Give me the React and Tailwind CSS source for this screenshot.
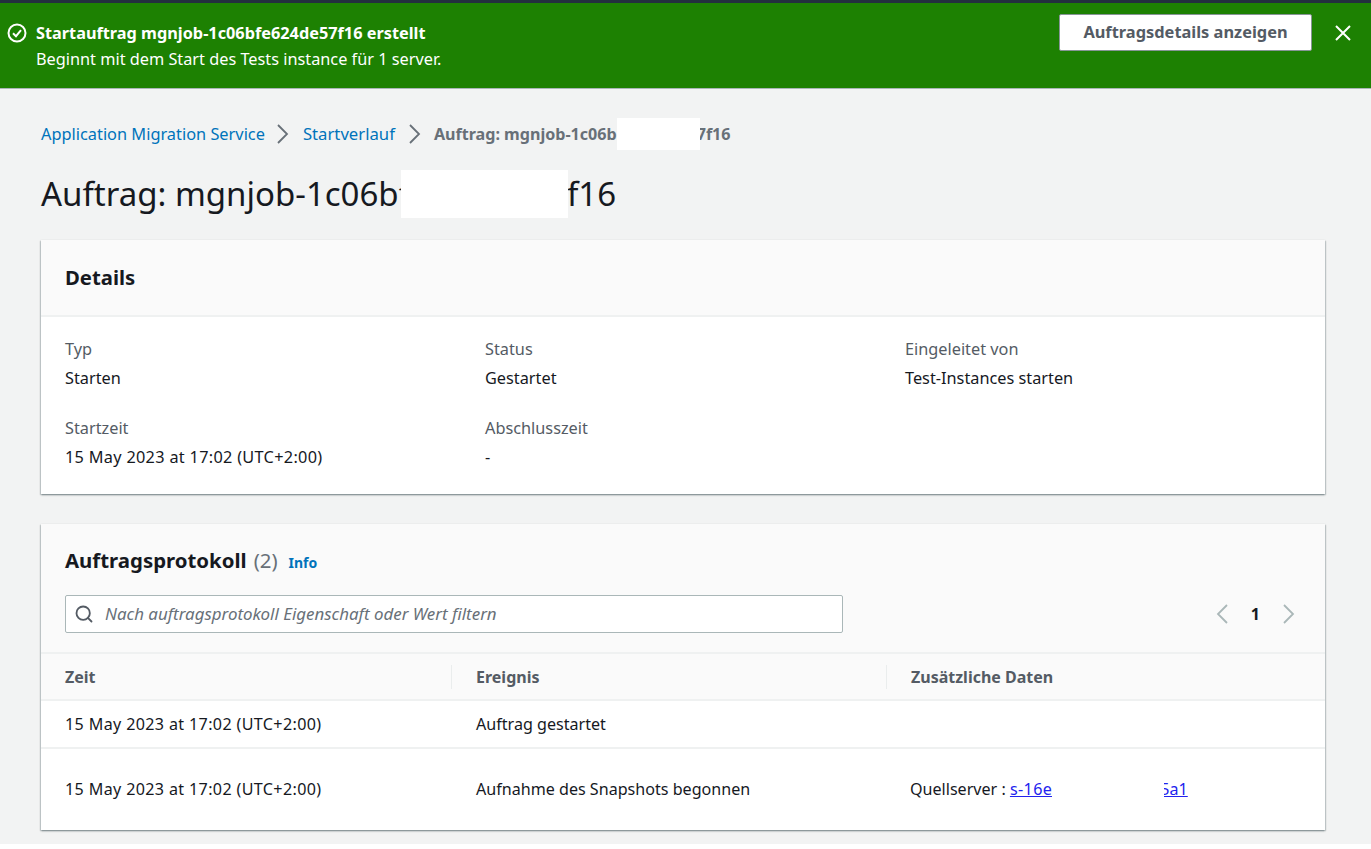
import { Search } from 'lucide-react';

function Redacted({ className }) {
  return <span className={`relative inline-block shrink-0 bg-white ${className}`} />;
}

function Chevron({ left = false, className }) {
  return (
    <svg className={`h-[20px] w-[12px] shrink-0 ${className}`} viewBox="0 0 12 20" fill="none" stroke="currentColor" strokeWidth="1.8">
      <path d={left ? 'M11 1l-9 9 9 9' : 'M1 1l9 9-9 9'} />
    </svg>
  );
}

function Field({ label, value }) {
  return (
    <div>
      <div className="text-[16.3px] leading-[22px] text-[#545b64]">{label}</div>
      <div className="mt-[7px] text-[16.3px] leading-[22px] text-[#16191f]">{value}</div>
    </div>
  );
}

const cardShadow = 'shadow-[0_1px_2px_0_rgba(0,28,36,0.35),1px_1px_1px_0_rgba(0,28,36,0.12),-1px_1px_1px_0_rgba(0,28,36,0.12)]';
const dateText = '15 May 2023 at 17:02 (UTC+2:00)';

export default function App() {
  return (
    <div className="min-h-[849px] bg-white font-['Noto_Sans',sans-serif]">
      <div className="h-[844px] overflow-hidden bg-[#f2f3f3]">
        <div className="h-[3px] bg-[#232f3e]" />
        <div className="flex h-[86px] items-start justify-between border-b border-[#aab7b8] bg-[#1d8102] text-white">
          <div className="flex pl-[7px] pt-[17px]">
            <svg className="mt-[3px] h-[20px] w-[20px]" viewBox="0 0 20 20" fill="none" stroke="currentColor" strokeWidth="2">
              <circle cx="10" cy="10" r="8.5" />
              <path d="M6 10.2l3 3 5-6" />
            </svg>
            <div className="ml-[9px] text-[16.3px] leading-[26px]">
              <div className="font-bold">Startauftrag mgnjob-1c06bfe624de57f16 erstellt</div>
              <div>Beginnt mit dem Start des Tests instance für 1 server.</div>
            </div>
          </div>
          <div className="flex items-center pr-[19px] pt-[11px]">
            <button className="h-[37px] w-[253px] rounded-[2px] border border-[#879596] bg-white text-[16.4px] font-bold text-[#545b64]">
              Auftragsdetails anzeigen
            </button>
            <svg className="ml-[22px] h-[18px] w-[18px]" viewBox="0 0 18 18" fill="none" stroke="currentColor" strokeWidth="2">
              <path d="M2 2l14 14M16 2L2 16" />
            </svg>
          </div>
        </div>

        <div className="pl-[41px] pr-[46px]">
          <div className="mt-[29px] flex h-[32px] items-center text-[16.35px]">
            <span className="text-[#0073bb]">Application Migration Service</span>
            <Chevron className="ml-[12px] mr-[14px] text-[#687078]" />
            <span className="text-[16.7px] text-[#0073bb]">Startverlauf</span>
            <Chevron className="ml-[14px] mr-[13px] text-[#687078]" />
            <span className="font-bold text-[16.1px] text-[#687078]">Auftrag: mgnjob-1c06b</span>
            <Redacted className="h-[32px] w-[83px]" />
            <span className="-ml-[3px] font-bold text-[16.1px] text-[#687078]">7f16</span>
          </div>

          <h1 className="mt-[20px] flex h-[48px] items-center text-[33px] font-normal text-[#16191f]">
            <span>Auftrag: mgnjob-1c06bf</span>
            <Redacted className="-ml-[9px] h-[48px] w-[167px]" />
            <span className="-ml-[1px]">f16</span>
          </h1>

          <section className={`mt-[22px] h-[254px] bg-white ${cardShadow}`}>
            <div className="flex h-[77px] items-center border-b-2 border-[#eff1f1] bg-[#fafafa] pb-[1px] pl-[24px]">
              <h2 className="text-[20.3px] font-bold text-[#16191f]">Details</h2>
            </div>
            <div className="grid grid-cols-[420px_420px_1fr] gap-y-[28px] pl-[24px] pt-[21px]">
              <Field label="Typ" value="Starten" />
              <Field label="Status" value="Gestartet" />
              <Field label="Eingeleitet von" value="Test-Instances starten" />
              <Field label="Startzeit" value={<span className="tracking-[0.3px]">{dateText}</span>} />
              <Field label="Abschlusszeit" value="-" />
            </div>
          </section>

          <section className={`mt-[30px] h-[306px] bg-white ${cardShadow}`}>
            <div className="h-[130px] border-b-2 border-[#eff1f1] bg-[#fafafa] pl-[24px] pr-[30px]">
              <div className="flex items-baseline pt-[21px]">
                <h2 className="text-[20.4px] font-bold leading-[30px] text-[#16191f]">Auftragsprotokoll</h2>
                <span className="ml-[7px] text-[20.4px] text-[#687078]">(2)</span>
                <span className="ml-[11px] text-[14px] font-bold text-[#0073bb]">Info</span>
              </div>
              <div className="mt-[19px] flex items-center justify-between">
                <div className="flex h-[38px] w-[778px] items-center rounded-[2px] border border-[#aab7b8] bg-white pl-[8px]">
                  <Search className="h-[20px] w-[20px] text-[#545b64]" strokeWidth={2.2} />
                  <span className="ml-[11px] text-[16.9px] italic text-[#687078]">Nach auftragsprotokoll Eigenschaft oder Wert filtern</span>
                </div>
                <div className="flex items-center text-[#aab7b8]">
                  <Chevron left />
                  <span className="mx-[23px] text-[16px] font-bold text-[#16191f]">1</span>
                  <Chevron />
                </div>
              </div>
            </div>

            <div className="grid h-[47px] grid-cols-[410px_435px_1fr] items-center border-b-2 border-[#eff1f1] bg-[#fafafa] text-[16px] font-bold text-[#545b64]">
              <div className="pl-[24px]">Zeit</div>
              <div className="h-[24px] border-l border-[#eaeded] pl-[24px] leading-[24px]">Ereignis</div>
              <div className="h-[24px] border-l border-[#eaeded] pl-[24px] leading-[24px]">Zusätzliche Daten</div>
            </div>
            <div className="grid h-[48px] grid-cols-[410px_435px_1fr] items-center border-b-2 border-[#eff1f1] text-[16.1px] text-[#16191f]">
              <div className="pl-[24px] tracking-[0.36px]">{dateText}</div>
              <div className="pl-[25px]">Auftrag gestartet</div>
              <div />
            </div>
            <div className="grid h-[81px] grid-cols-[410px_435px_1fr] items-center text-[16.1px] text-[#16191f]">
              <div className="pl-[24px] tracking-[0.36px]">{dateText}</div>
              <div className="pl-[25px]">Aufnahme des Snapshots begonnen</div>
              <div className="flex pl-[24px]">
                <span>Quellserver :&nbsp;</span>
                <span className="text-[#2222ee] underline tracking-[0.4px]">s-16e</span>
                <Redacted className="h-[22px] w-[112px]" />
                <span className="-ml-[4px] text-[#2222ee] underline">5a1</span>
              </div>
            </div>
          </section>
        </div>
      </div>
    </div>
  );
}
